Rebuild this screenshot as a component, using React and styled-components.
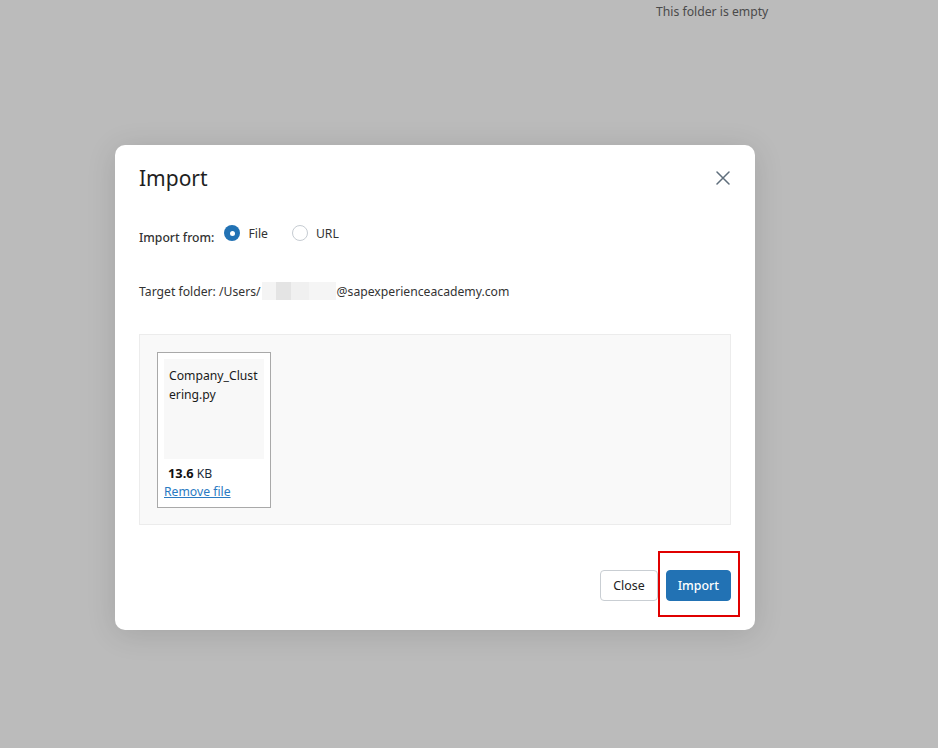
import React from "react";
import styled, { createGlobalStyle } from "styled-components";

const Global = createGlobalStyle`
  html, body { margin: 0; padding: 0; }
  body {
    width: 938px;
    height: 748px;
    overflow: hidden;
    background: #bbbbbb;
    font-family: "Noto Sans", "Open Sans", sans-serif;
    color: #222;
  }
`;

const Page = styled.div`
  width: 938px;
  height: 748px;
  position: relative;
  display: flex;
  flex-direction: column;
`;

const EmptyNote = styled.div`
  font-size: 12.2px;
  color: #4a4a4a;
  box-sizing: border-box;
  padding: 3px 0 0 656px;
  height: 22px;
  line-height: 18px;
`;

const Modal = styled.div`
  margin: 123px 0 0 115px;
  width: 640px;
  height: 485px;
  box-sizing: border-box;
  background: #ffffff;
  border-radius: 10px;
  box-shadow: 0 4px 30px rgba(0, 0, 0, 0.12);
  display: flex;
  flex-direction: column;
  padding: 0 24px;
`;

const Header = styled.div`
  display: flex;
  align-items: center;
  justify-content: space-between;
  height: 66px;
`;

const Title = styled.h2`
  margin: 0;
  font-size: 21px;
  font-weight: 400;
  color: #1f1f1f;
`;

const CloseX = styled.button`
  border: none;
  background: none;
  padding: 0;
  width: 16px;
  height: 16px;
  display: flex;
  align-items: center;
  justify-content: center;
  cursor: pointer;
`;

const SourceRow = styled.div`
  display: flex;
  align-items: center;
  margin-top: 10px;
  height: 24px;
  font-size: 12.2px;
`;

const Label = styled.span`
  font-weight: 500;
  color: #333;
  margin-right: 10px;
  padding-top: 8px;
`;

const RadioOption = styled.label`
  display: flex;
  align-items: center;
  gap: 8px;
  margin-right: 24px;
  color: #333;
`;

const RadioDot = styled.span`
  width: 16px;
  height: 16px;
  box-sizing: border-box;
  border-radius: 50%;
  border: ${(p) => (p.$checked ? "none" : "1px solid #c6ccd2")};
  background: ${(p) => (p.$checked ? "#2272b4" : "#fff")};
  display: flex;
  align-items: center;
  justify-content: center;
  &::after {
    content: "";
    display: ${(p) => (p.$checked ? "block" : "none")};
    width: 5px;
    height: 5px;
    border-radius: 50%;
    background: #fff;
  }
`;

const TargetRow = styled.div`
  margin-top: 36px;
  font-size: 12.2px;
  color: #333;
  display: flex;
  align-items: center;
  height: 20px;
`;

const Redacted = styled.span`
  display: inline-flex;
  height: 18px;
  margin: 0 1px 0 1px;
`;

const RedactBlock = styled.span`
  width: ${(p) => p.$w}px;
  background: ${(p) => p.$c};
`;

const DropZone = styled.div`
  margin-top: 33px;
  height: 191px;
  box-sizing: border-box;
  background: #f9f9f9;
  border: 1px solid #ececec;
  padding: 17px 17px;
  display: flex;
  align-items: flex-start;
`;

const FileCard = styled.div`
  width: 114px;
  height: 156px;
  box-sizing: border-box;
  border: 1px solid #a9a9a9;
  background: #ffffff;
  padding: 6px;
  display: flex;
  flex-direction: column;
`;

const Preview = styled.div`
  width: 100px;
  height: 100px;
  background: #f8f8f8;
  box-sizing: border-box;
  padding: 7px 3px 0 5px;
  font-size: 12.2px;
  line-height: 19px;
  color: #1a1a1a;
  word-break: break-all;
`;

const Size = styled.div`
  margin-top: 5px;
  padding-left: 4px;
  font-size: 12.2px;
  line-height: 18px;
  color: #1a2a3a;
  strong {
    font-size: 12.8px;
    font-weight: 700;
    color: #111;
  }
`;

const RemoveLink = styled.a`
  font-size: 12.2px;
  line-height: 18px;
  color: #2a7ac2;
  text-decoration: underline;
  cursor: pointer;
`;

const Footer = styled.div`
  margin-top: auto;
  height: 60px;
  display: flex;
  justify-content: flex-end;
  align-items: flex-start;
  gap: 8px;
  position: relative;
`;

const Button = styled.button`
  height: 31px;
  box-sizing: border-box;
  padding: 0 ${(p) => (p.$primary ? "11px" : "12px")};
  border-radius: 4px;
  font-family: inherit;
  font-size: 12.4px;
  border: 1px solid ${(p) => (p.$primary ? "#2272b4" : "#c9ced3")};
  background: ${(p) => (p.$primary ? "#2272b4" : "#ffffff")};
  color: ${(p) => (p.$primary ? "#ffffff" : "#222")};
  font-weight: ${(p) => (p.$primary ? 500 : 400)};
  cursor: pointer;
`;

const Highlight = styled.div`
  position: absolute;
  right: -9px;
  top: -19px;
  width: 82px;
  height: 66px;
  box-sizing: border-box;
  border: 2px solid #e00000;
  pointer-events: none;
`;

export default function App() {
  return (
    <>
      <Global />
      <Page>
        <EmptyNote>This folder is empty</EmptyNote>
        <Modal>
          <Header>
            <Title>Import</Title>
            <CloseX aria-label="Close">
              <svg width="14" height="14" viewBox="0 0 14 14">
                <path d="M1 1 L13 13 M13 1 L1 13" stroke="#5f6e7c" strokeWidth="1.5" strokeLinecap="round" />
              </svg>
            </CloseX>
          </Header>
          <SourceRow>
            <Label>Import from:</Label>
            <RadioOption>
              <RadioDot $checked />
              File
            </RadioOption>
            <RadioOption>
              <RadioDot />
              URL
            </RadioOption>
          </SourceRow>
          <TargetRow>
            Target folder: /Users/
            <Redacted>
              <RedactBlock $w={14} $c="#f4f4f4" />
              <RedactBlock $w={15} $c="#e4e4e4" />
              <RedactBlock $w={18} $c="#f0f0f0" />
              <RedactBlock $w={27} $c="#f5f5f5" />
            </Redacted>
            @sapexperienceacademy.com
          </TargetRow>
          <DropZone>
            <FileCard>
              <Preview>Company_Clustering.py</Preview>
              <Size>
                <strong>13.6</strong> KB
              </Size>
              <RemoveLink>Remove file</RemoveLink>
            </FileCard>
          </DropZone>
          <Footer>
            <Button>Close</Button>
            <Button $primary>Import</Button>
            <Highlight />
          </Footer>
        </Modal>
      </Page>
    </>
  );
}
